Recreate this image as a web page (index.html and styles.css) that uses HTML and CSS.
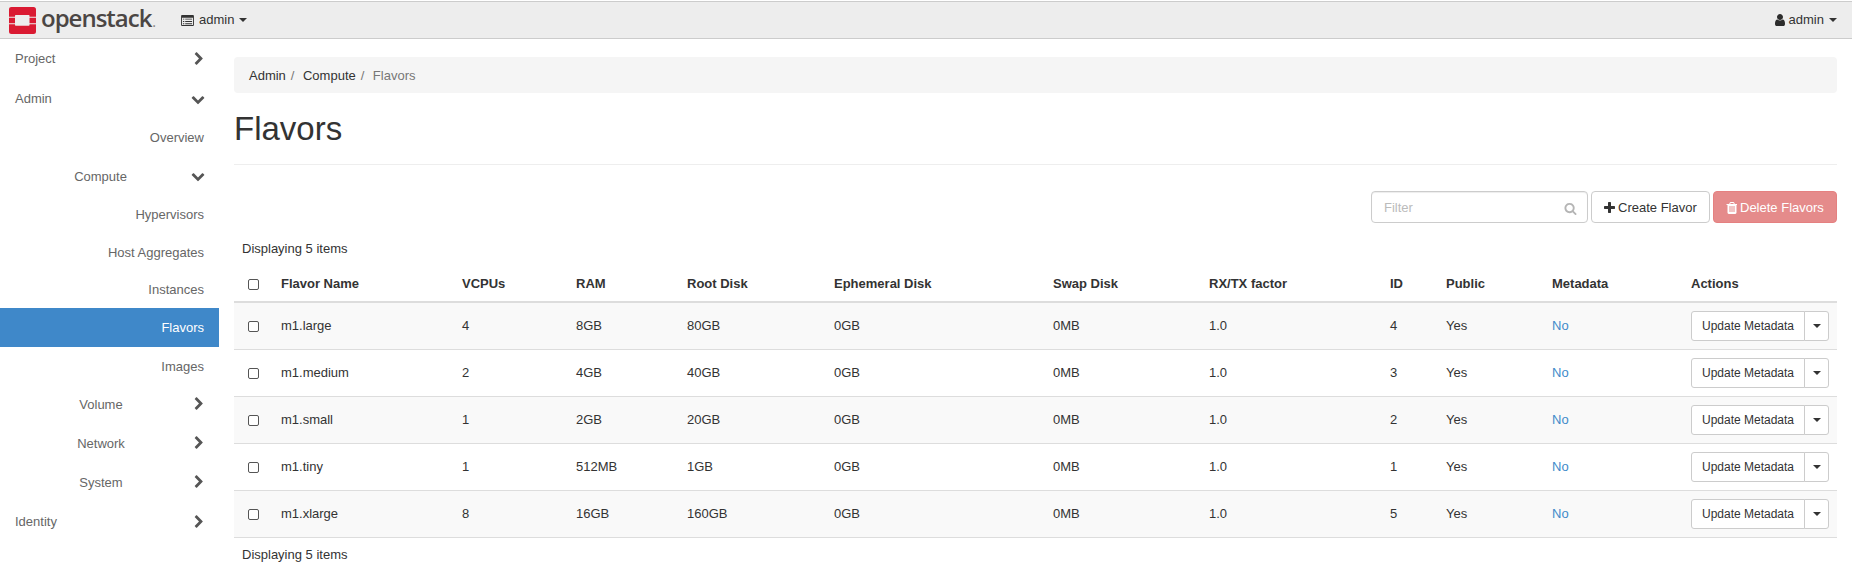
FILE: index.html
```html
<!DOCTYPE html>
<html lang="en">
<head>
<meta charset="utf-8">
<title>Flavors</title>
<link rel="stylesheet" href="styles.css">
</head>
<body>
<svg class="sprites" width="0" height="0" aria-hidden="true">
  <symbol id="i-right" viewBox="0 0 1792 1792"><path d="M1363 877l-742 742q-19 19-45 19t-45-19l-166-166q-19-19-19-45t19-45l531-531-531-531q-19-19-19-45t19-45l166-166q19-19 45-19t45 19l742 742q19 19 19 45t-19 45z"/></symbol>
  <symbol id="i-down" viewBox="0 0 1792 1792"><path d="M1683 808l-742 741q-19 19-45 19t-45-19l-742-741q-19-19-19-45.5t19-45.5l166-165q19-19 45-19t45 19l531 531 531-531q19-19 45-19t45 19l166 165q19 19 19 45.5t-19 45.5z"/></symbol>
</svg>
<header class="navbar">
  <div class="brand">
    <svg class="logo" viewBox="0 0 27 27" aria-hidden="true"><path fill="#da1a32" d="M2.500 0h22a2.500 2.500 0 0 1 2.500 2.500v7.200h-6.500v-1a.7.7 0 0 0-.7-.7h-13.100a.7.7 0 0 0-.7.7v1h-6v-7.200a2.500 2.500 0 0 1 2.500-2.500zM0 10.700h6v5.600h-6zM20.500 10.700h6.500v5.600h-6.500zM0 17.300h6v.7a.7.7 0 0 0 .7.7h13.100a.7.7 0 0 0 .7-.7v-.7h6.500v7.200a2.500 2.500 0 0 1-2.500 2.500h-22a2.500 2.500 0 0 1-2.500-2.500z"/></svg>
    <span class="wordmark">openstack<span class="dot">.</span></span>
  </div>
  <div class="nav-item project">
    <svg class="ico-list" viewBox="0 0 14 12" aria-hidden="true"><path fill-rule="evenodd" d="M1 0h12a1 1 0 0 1 1 1v10a1 1 0 0 1-1 1h-12a1 1 0 0 1-1-1v-10a1 1 0 0 1 1-1zM1 3v8h12v-8zM2 4h1.500v1h-1.500zM4.500 4h7.500v1h-7.500zM2 6.500h1.500v1h-1.500zM4.500 6.500h7.500v1h-7.500zM2 9h1.500v1h-1.500zM4.500 9h7.500v1h-7.500z"/></svg>
    <span>admin</span><span class="caret"></span>
  </div>
  <div class="nav-item user">
    <svg class="ico-user" viewBox="0 0 1408 1792" aria-hidden="true"><path d="M1408 1399q0 109-62.500 187t-150.500 78h-854q-88 0-150.500-78t-62.500-187q0-85 8.500-160.500t31.500-152 58.500-131 94-89 134.500-34.500q131 128 313 128t313-128q76 0 134.500 34.500t94 89 58.500 131 31.500 152 8.500 160.500zm-256-887q0 159-112.500 271.500t-271.500 112.500-271.500-112.500-112.500-271.500 112.500-271.500 271.500-112.500 271.500 112.500 112.500 271.500z"/></svg>
    <span>admin</span><span class="caret"></span>
  </div>
</header>
<div class="layout">
  <nav class="sidebar">
    <a class="side l1"><span class="label">Project</span><svg class="chev"><use href="#i-right"/></svg></a>
    <a class="side l1"><span class="label">Admin</span><svg class="chev down"><use href="#i-down"/></svg></a>
    <a class="side l3">Overview</a>
    <a class="side l2"><span class="label">Compute</span><svg class="chev down"><use href="#i-down"/></svg></a>
    <a class="side l3">Hypervisors</a>
    <a class="side l3">Host Aggregates</a>
    <a class="side l3">Instances</a>
    <a class="side l3 active">Flavors</a>
    <a class="side l3">Images</a>
    <a class="side l2"><span class="label">Volume</span><svg class="chev"><use href="#i-right"/></svg></a>
    <a class="side l2"><span class="label">Network</span><svg class="chev"><use href="#i-right"/></svg></a>
    <a class="side l2"><span class="label">System</span><svg class="chev"><use href="#i-right"/></svg></a>
    <a class="side l1"><span class="label">Identity</span><svg class="chev"><use href="#i-right"/></svg></a>
  </nav>
  <main class="content">
    <ol class="breadcrumb">
      <li>Admin</li><li class="sep">/</li><li>Compute</li><li class="sep">/</li><li class="current">Flavors</li>
    </ol>
    <h1 class="title">Flavors</h1>
    <div class="actions">
      <div class="filter">
        <span class="placeholder">Filter</span>
        <svg class="ico-search" viewBox="0 0 1792 1792" aria-hidden="true"><path d="M1216 832q0-185-131.500-316.500t-316.500-131.500-316.500 131.500-131.500 316.500 131.500 316.500 316.500 131.500 316.500-131.500 131.500-316.500zm512 832q0 52-38 90t-90 38q-54 0-90-38l-343-342q-179 124-399 124-143 0-273.500-55.500t-225-150-150-225-55.500-273.500 55.500-273.500 150-225 225-150 273.500-55.500 273.500 55.500 225 150 150 225 55.500 273.500q0 220-124 399l343 343q37 37 37 90z"/></svg>
      </div>
      <button class="btn create" type="button"><svg class="ico-btn" viewBox="0 0 1408 1792" aria-hidden="true"><path d="M1408 736v192q0 40-28 68t-68 28h-416v416q0 40-28 68t-68 28h-192q-40 0-68-28t-28-68v-416h-416q-40 0-68-28t-28-68v-192q0-40 28-68t68-28h416v-416q0-40 28-68t68-28h192q40 0 68 28t28 68v416h416q40 0 68 28t28 68z"/></svg>Create Flavor</button>
      <button class="btn danger" type="button"><svg class="ico-btn" viewBox="128 0 1408 1792" aria-hidden="true"><path d="M704 1376v-704q0-14-9-23t-23-9h-64q-14 0-23 9t-9 23v704q0 14 9 23t23 9h64q14 0 23-9t9-23zm256 0v-704q0-14-9-23t-23-9h-64q-14 0-23 9t-9 23v704q0 14 9 23t23 9h64q14 0 23-9t9-23zm256 0v-704q0-14-9-23t-23-9h-64q-14 0-23 9t-9 23v704q0 14 9 23t23 9h64q14 0 23-9t9-23zm-544-992h448l-48-117q-7-9-17-11h-317q-10 2-17 11zm928 32v64q0 14-9 23t-23 9h-96v948q0 83-47 143.500t-113 60.500h-832q-66 0-113-58.500t-47-141.500v-952h-96q-14 0-23-9t-9-23v-64q0-14 9-23t23-9h309l70-167q15-37 54-63t79-26h320q40 0 79 26t54 63l70 167h309q14 0 23 9t9 23z"/></svg>Delete Flavors</button>
    </div>
    <div class="count top">Displaying 5 items</div>
    <table class="flavors">
      <colgroup>
        <col class="c-check"><col class="c-name"><col class="c-vcpu"><col class="c-ram"><col class="c-root"><col class="c-eph"><col class="c-swap"><col class="c-rx"><col class="c-id"><col class="c-pub"><col class="c-meta"><col class="c-act">
      </colgroup>
      <thead>
        <tr><th class="chk"><input type="checkbox"></th><th>Flavor Name</th><th>VCPUs</th><th>RAM</th><th>Root Disk</th><th>Ephemeral Disk</th><th>Swap Disk</th><th>RX/TX factor</th><th>ID</th><th>Public</th><th>Metadata</th><th>Actions</th></tr>
      </thead>
      <tbody>
        <tr><td class="chk"><input type="checkbox"></td><td>m1.large</td><td>4</td><td>8GB</td><td>80GB</td><td>0GB</td><td>0MB</td><td>1.0</td><td>4</td><td>Yes</td><td class="link">No</td><td><div class="split"><span class="main">Update Metadata</span><span class="drop"><span class="caret"></span></span></div></td></tr>
        <tr><td class="chk"><input type="checkbox"></td><td>m1.medium</td><td>2</td><td>4GB</td><td>40GB</td><td>0GB</td><td>0MB</td><td>1.0</td><td>3</td><td>Yes</td><td class="link">No</td><td><div class="split"><span class="main">Update Metadata</span><span class="drop"><span class="caret"></span></span></div></td></tr>
        <tr><td class="chk"><input type="checkbox"></td><td>m1.small</td><td>1</td><td>2GB</td><td>20GB</td><td>0GB</td><td>0MB</td><td>1.0</td><td>2</td><td>Yes</td><td class="link">No</td><td><div class="split"><span class="main">Update Metadata</span><span class="drop"><span class="caret"></span></span></div></td></tr>
        <tr><td class="chk"><input type="checkbox"></td><td>m1.tiny</td><td>1</td><td>512MB</td><td>1GB</td><td>0GB</td><td>0MB</td><td>1.0</td><td>1</td><td>Yes</td><td class="link">No</td><td><div class="split"><span class="main">Update Metadata</span><span class="drop"><span class="caret"></span></span></div></td></tr>
        <tr><td class="chk"><input type="checkbox"></td><td>m1.xlarge</td><td>8</td><td>16GB</td><td>160GB</td><td>0GB</td><td>0MB</td><td>1.0</td><td>5</td><td>Yes</td><td class="link">No</td><td><div class="split"><span class="main">Update Metadata</span><span class="drop"><span class="caret"></span></span></div></td></tr>
      </tbody>
    </table>
    <div class="count bottom">Displaying 5 items</div>
  </main>
</div>
</body>
</html>
```
FILE: styles.css
```css
* { box-sizing: border-box; }
html, body { margin: 0; padding: 0; }
body {
  font-family: "Liberation Sans", Arial, sans-serif;
  font-size: 13px;
  line-height: 18px;
  color: #333;
  background: #fff;
  overflow: hidden;
}
.sprites { display: block; height: 0; }

.navbar {
  display: flex;
  align-items: center;
  height: 38px;
  margin-top: 1px;
  background: #ededed;
  border-top: 1px solid #ccc;
  border-bottom: 1px solid #ccc;
  padding: 0 15px 0 9px;
}
.brand { display: flex; align-items: center; gap: 5px; width: 172px; }
.logo { width: 27px; height: 27px; flex: none; }
.wordmark {
  font-family: "Open Sans", sans-serif;
  font-size: 24px;
  font-weight: 600;
  line-height: 27px;
  color: #4b4644;
  letter-spacing: -1px;
}
.dot { font-size: 12px; letter-spacing: 0; color: #8a8583; margin-left: 1px; }
.nav-item { display: flex; align-items: center; color: #333; }
.user { margin-left: auto; }
.ico-list { width: 13px; height: 11px; margin-right: 5px; fill: #333; }
.ico-user { width: 11px; height: 14px; margin-right: 4px; fill: #2c2c2c; }
.caret {
  display: inline-block;
  width: 0;
  height: 0;
  border-top: 4px solid #333;
  border-left: 4px solid transparent;
  border-right: 4px solid transparent;
}
.nav-item .caret { margin-left: 5px; }

.layout { display: flex; }
.sidebar { width: 219px; flex: none; display: flex; flex-direction: column; }
.side {
  display: flex;
  align-items: center;
  color: #666;
  padding-right: 15px;
}
.l1 { height: 40px; padding-left: 15px; padding-right: 13px; }
.l2 { height: 39px; padding-left: 10px; padding-right: 13px; }
.l3 { height: 37.6px; padding-top: 1.4px; justify-content: flex-end; }
.side .label { flex: 1; }
.l2 .label { text-align: center; padding-top: 1px; }
.active { height: 39px; padding-top: 0; background: #3f88c9; color: #fff; }
.chev { width: 14px; height: 14px; fill: #555; flex: none; }
.chev.down { margin-right: 1px; }

.content { flex: 1; min-width: 0; padding: 18px 15px 0 15px; }
.breadcrumb {
  display: flex;
  align-items: center;
  height: 36px;
  margin: 0;
  padding: 2px 15px 0;
  list-style: none;
  background: #f5f5f5;
  border-radius: 4px;
}
.sep { color: #777; padding: 0 8.5px 0 5px; }
.current { color: #777; }
.title {
  margin: 0;
  height: 72px;
  padding-top: 18px;
  font-size: 33px;
  line-height: 36px;
  font-weight: 400;
  color: #333;
  border-bottom: 1px solid #eee;
}
.actions { display: flex; justify-content: flex-end; gap: 3px; margin-top: 26px; height: 32px; }
.filter {
  display: flex;
  align-items: center;
  justify-content: space-between;
  width: 217px;
  padding: 2px 10px 0 12px;
  border: 1px solid #ccc;
  border-radius: 4px;
  box-shadow: inset 0 1px 1px rgba(0,0,0,.075);
}
.placeholder { color: #bbb; }
.ico-search { width: 13px; height: 13px; fill: #b5b5b5; }
.btn {
  display: flex;
  align-items: center;
  font: inherit;
  padding: 2px 12px 0;
  border: 1px solid #ccc;
  border-radius: 4px;
  background: #fff;
  color: #333;
}
.ico-btn { width: 11px; height: 14px; margin-right: 3px; fill: currentColor; }
.create { width: 119px; }
.danger { width: 124px; background: #e58b8b; border-color: #e58080; color: #fff; }
.count { height: 18px; padding-left: 8px; color: #333; }
.count.top { margin-top: 17px; }
.count.bottom { margin-top: 8px; }

.flavors { width: 100%; table-layout: fixed; border-collapse: collapse; margin-top: 8px; }
.c-check { width: 39px; }
.c-name { width: 181px; }
.c-vcpu { width: 114px; }
.c-ram { width: 111px; }
.c-root { width: 147px; }
.c-eph { width: 219px; }
.c-swap { width: 156px; }
.c-rx { width: 181px; }
.c-id { width: 56px; }
.c-pub { width: 106px; }
.c-meta { width: 139px; }
.c-act { width: 154px; }
th, td { padding: 0 8px; text-align: left; vertical-align: middle; }
th { height: 36px; font-weight: 700; border-bottom: 2px solid #ddd; }
td { height: 47px; border-bottom: 1px solid #ddd; }
tbody tr:nth-child(odd) { background: #f9f9f9; }
.chk { padding: 0 0 0 14px; }
.chk input {
  display: block;
  appearance: none;
  margin: 2px 0 0;
  width: 11px;
  height: 11px;
  background: #fff;
  border: 1px solid #555;
  border-radius: 2px;
}
.link { color: #428bca; }
.split { display: flex; height: 30px; width: 138px; }
.main {
  display: flex;
  align-items: center;
  justify-content: center;
  width: 114px;
  flex: none;
  background: #fff;
  border: 1px solid #ccc;
  border-radius: 3px 0 0 3px;
  font-size: 12px;
}
.drop {
  display: flex;
  align-items: center;
  justify-content: center;
  flex: 1;
  margin-left: -1px;
  background: #fff;
  border: 1px solid #ccc;
  border-radius: 0 3px 3px 0;
}
```
